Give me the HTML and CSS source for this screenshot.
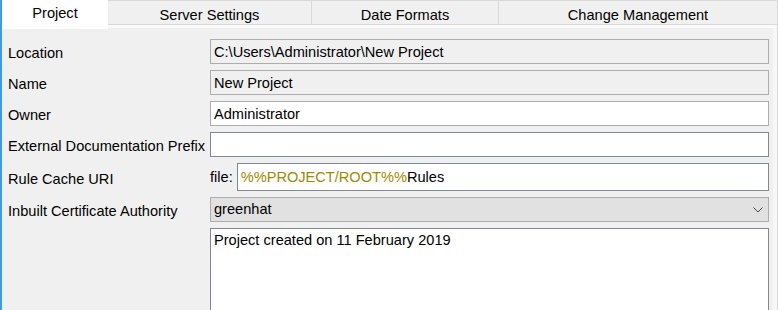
FILE: index.html
```html
<!DOCTYPE html>
<html lang="en">
<head>
  <meta charset="UTF-8" />
  <title>Project Settings</title>
  <link rel="stylesheet" href="styles.css">
</head>
<body>

  <div class="frame">
    <div class="tabs">
      <div class="tab active">Project</div>
      <div class="tab tab-server">Server Settings</div>
      <div class="tab tab-date">Date Formats</div>
      <div class="tab tab-change">Change Management</div>
    </div>

    <div class="panel">
      <div class="form">
        <label>Location</label>
        <div class="field readonly">C:\Users\Administrator\New Project</div>

        <label>Name</label>
        <div class="field readonly">New Project</div>

        <label>Owner</label>
        <div class="field">Administrator</div>

        <label>External Documentation Prefix</label>
        <div class="field focus"></div>

        <label>Rule Cache URI</label>
        <div class="uri">
          <span class="prefix">file:</span>
          <div class="field tall focus"><span class="var">%%PROJECT/ROOT%%</span>Rules</div>
        </div>

        <label>Inbuilt Certificate Authority</label>
        <div class="field combo">
          <span>greenhat</span>
          <svg class="chevron" width="10" height="6" viewBox="0 0 10 6">
            <path d="M0.5 0.5 L5 5 L9.5 0.5" fill="none" stroke="#444" stroke-width="1"/>
          </svg>
        </div>

        <div></div>
        <div class="field notes">Project created on 11 February 2019</div>
      </div>
    </div>
  </div>

</body>
</html>
```

FILE: styles.css
```css
* {
  box-sizing: border-box;
  margin: 0;
  padding: 0;
}

body {
  font-family: 'Liberation Sans', Arial, sans-serif;
  font-size: 14.6px;
  color: #000;
  background-color: #f0f0f0;
  width: 778px;
  height: 310px;
  overflow: hidden;
}

.frame {
  border-left: 2px solid #3d9be9;
  height: 310px;
  display: flex;
  flex-direction: column;
}

.tabs {
  display: flex;
  height: 25px;
  position: relative;
  z-index: 1;
}

.tab {
  height: 25px;
  line-height: 28px;
  text-align: center;
  background-color: #f0f0f0;
  border: 1px solid #d9d9d9;
  border-left: none;
}

.tab.active {
  width: 106px;
  height: 29px;
  line-height: 26px;
  background-color: #fff;
  border: none;
}

.tab-server { width: 204px; }
.tab-date { width: 187px; }
.tab-change { flex: 1; }

.panel {
  flex: 1;
  border-right: 1px solid #d9d9d9;
  box-shadow: inset 0 3px 0 #fafafa, inset -4px 0 0 #f7f7f7;
  padding: 14px 8px 0 6px;
}

.form {
  display: grid;
  grid-template-columns: 202px 1fr;
  row-gap: 6px;
  align-items: center;
}

label {
  line-height: 20px;
  padding-top: 3px;
}

.field {
  height: 25px;
  line-height: 25px;
  padding: 0 3px;
  background-color: #fff;
  border: 1px solid #adadad;
  white-space: nowrap;
}

.field.readonly {
  background-color: #f0f0f0;
}

.field.focus {
  border-color: #7a8a99;
}

.field.tall {
  height: 28px;
  line-height: 27px;
}

.uri {
  display: flex;
  align-items: center;
  gap: 4px;
}

.uri .field {
  flex: 1;
}

.var {
  color: #9c8a00;
}

.field.combo {
  display: flex;
  justify-content: space-between;
  align-items: center;
  background-color: #e1e1e1;
  border-color: #adadad;
}

.chevron {
  margin-right: 2px;
}

.notes {
  height: 90px;
  line-height: 23px;
  align-self: start;
  border-color: #828790;
}
```
